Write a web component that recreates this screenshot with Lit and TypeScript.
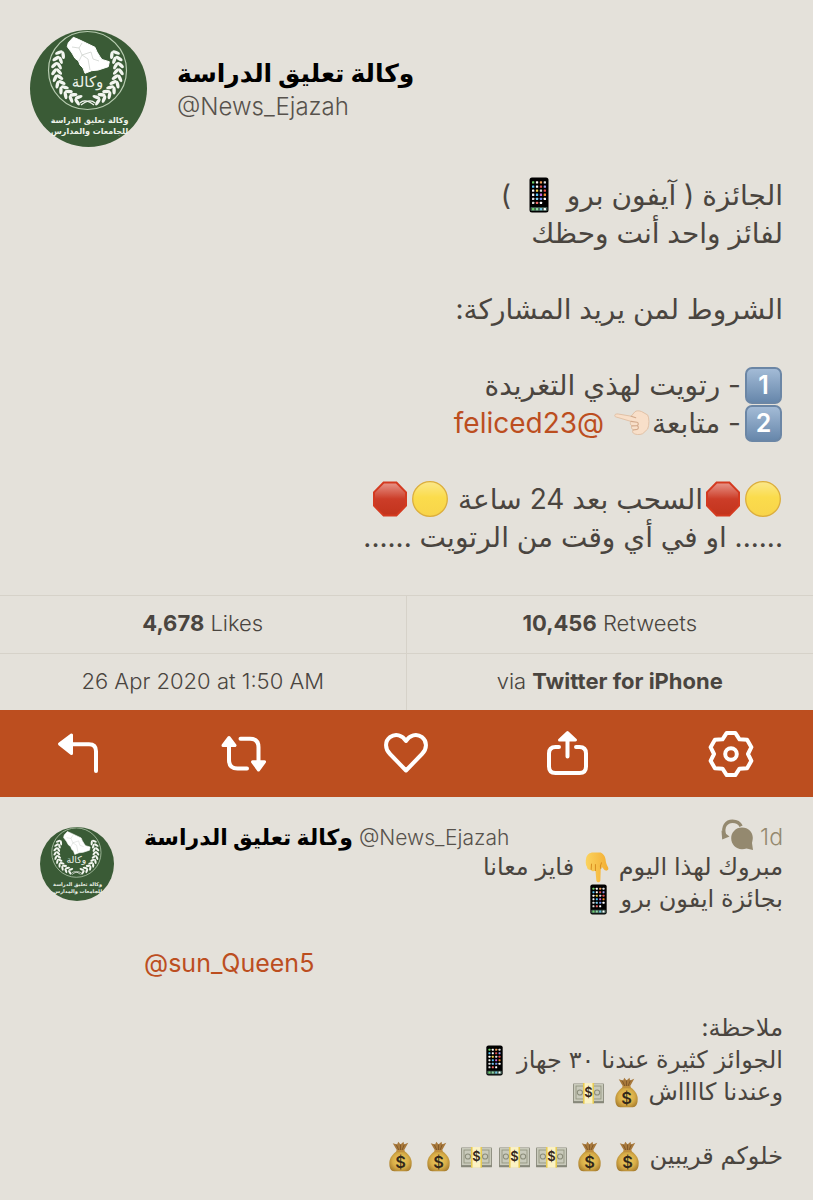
import { LitElement, html, svg, css } from "lit";
import { customElement } from "lit/decorators.js";

const polar = (cx: number, cy: number, r: number, deg: number) => {
  const a = (deg * Math.PI) / 180;
  return [cx + r * Math.cos(a), cy + r * Math.sin(a)];
};

/* ---------- emoji ---------- */

const phone = () => {
  const colors = ["#6fd36b", "#fff", "#f5a05a", "#ddd", "#5ac8fa", "#fff", "#e65050", "#9c9cf0", "#fff", "#f7d64a", "#ddd", "#e65050", "#f0f0f0", "#5ac8fa", "#c86be0", "#f58a2a", "#ddd", "#7fd0f0", "#6f8fe8", "#fff", "#ddd", "#f06a6a", "#fff"];
  return html`<svg class="emoji" viewBox="0 0 36 36" role="img" aria-label="phone">
    <rect x="8.5" y="0.5" width="19" height="35" rx="2.5" fill="#000" />
    <rect x="9.5" y="30" width="17" height="4" rx="1" fill="#3f5a50" />
    ${colors.map((c, i) => svg`<rect x=${11 + (i % 4) * 3.9} y=${4.3 + Math.floor(i / 4) * 4.1} width="2.3" height="2.3" rx=".5" fill=${c} />`)}
    ${["#6fd36b", "#8fd8a0", "#6ec6e8", "#fff"].map((c, i) => svg`<rect x=${11 + i * 3.9} y="30.9" width="2.3" height="2.3" rx=".5" fill=${c} />`)}
  </svg>`;
};

const yellow = () => html`<svg class="emoji" viewBox="0 0 36 36" role="img" aria-label="yellow circle">
  <defs><linearGradient id="y" x2="0" y2="1"><stop stop-color="#fbe88a" /><stop offset=".45" stop-color="#fbdc4c" /><stop offset="1" stop-color="#f8d44a" /></linearGradient></defs>
  <circle cx="18" cy="18" r="17.3" fill="url(#y)" stroke="#dcae3c" stroke-width="1.3" />
</svg>`;

const stop = () => html`<svg class="emoji" viewBox="0 0 36 36" role="img" aria-label="stop sign">
  <defs><linearGradient id="s" x2="0" y2="1"><stop stop-color="#e8968a" /><stop offset=".5" stop-color="#cc3d28" /><stop offset="1" stop-color="#c2331c" /></linearGradient></defs>
  <path d="M11.6 1.5h12.8l9.6 9.8v13.4l-9.6 9.8H11.6L2 24.700V11.300z" fill="url(#s)" stroke="#d43a20" stroke-width="2" />
</svg>`;

const pointLeft = () => html`<svg class="emoji" viewBox="0 0 36 36" role="img" aria-label="pointing left">
  <path d="M.8 10.500C.8 9 2.500 8.800 4.200 9l13 2.200 3.500-4.200c1.500-1.600 4.500-1.400 7-.4l6 3.400c1.500 3 1.800 9.500 0 14l-5 4.700c-3 1.400-8 1-9.500-.7-1.200-1.300-.6-2.300.3-3.200-2.200-.8-2.600-2.300-1.600-4-1.800-1-2-3-.9-4.400L2.800 12.200C1.500 12 .8 11.500.8 10.500z" fill="#f8dfc9" stroke="#dfbda2" stroke-width=".9" />
  <path d="M17 16.400l6 .8c2 .6 1.600 3.400-.4 3.500l-4.600.2M19 25l4-.6c1.600-.3 1.900-2.600.4-3.700M17.200 11.200l4.500 1.600" fill="none" stroke="#d2a98b" stroke-width="1.100" stroke-linecap="round" />
</svg>`;

const pointDown = () => html`<svg class="emoji" viewBox="0 0 36 36" role="img" aria-label="pointing down">
  <defs><linearGradient id="d" x2="1" y2="0"><stop stop-color="#fbd35e" /><stop offset="1" stop-color="#f3ae34" /></linearGradient></defs>
  <path d="M6 7C7 3 10 .5 14 .5h9c3 1.500 5 4 5.500 8 .3 3 1 6 3 9.500 1 2-.6 4-2.600 3.600-1.600-.4-2.900-1.800-3.900-3.600l-2 .3L22.500 33c-.3 2.800-4.300 2.800-4.700 0L16.800 21.500c-1.500 1.500-4.600 1.200-5-1C9.400 21 6.900 19.600 7 17.300 5.200 15 5.200 11 6 7z" fill="url(#d)" />
  <path d="M11.800 20.500l.4-6.500M16.800 21.500V14.500M23 19.300c-.6-2-.5-4.500.8-6.700" fill="none" stroke="#d98f22" stroke-width="1.200" stroke-linecap="round" />
</svg>`;

const bag = () => html`<svg class="emoji" viewBox="0 0 36 36" role="img" aria-label="money bag">
  <defs><radialGradient id="b" cx=".5" cy=".5" r=".6"><stop stop-color="#f0cf60" /><stop offset=".6" stop-color="#d8ad48" /><stop offset="1" stop-color="#a47a2c" /></radialGradient></defs>
  <path d="M9 2.500l5 1.500L15.500 1l2.500 3L21.500 1l.6 3L27 2l-5.500 10h-7z" fill="#a8793c" />
  <path d="M13 4l3.500 7.500M18 4v7M22.500 4l-2.900 7" stroke="#7d5424" stroke-width="1" />
  <path d="M14.500 11h7C27 14.500 31 19.500 31 25.500c0 6.500-2.500 9.500-5.500 9.500h-15c-3.500 0-5.500-3-5.500-9.500 0-6 4.500-11 9.500-14.500z" fill="url(#b)" />
  <rect x="13" y="10.500" width="10" height="2.400" rx="1.200" fill="#c08f3e" />
  <text x="18" y="31" class="dollar" font-size="19">$</text>
</svg>`;

const cash = () => html`<svg class="emoji" viewBox="0 0 36 36" role="img" aria-label="banknotes">
  <rect y="7.500" width="36" height="23" rx="1" fill="#87887a" />
  <rect x="1" y="8" width="34" height="20" fill="#c9cabb" />
  <rect x="3.500" y="10.500" width="29" height="15" fill="none" stroke="#93957f" stroke-width="1" />
  <circle cx="8" cy="18" r="3" fill="none" stroke="#8b8d7a" stroke-width="1.200" />
  <circle cx="28" cy="18" r="3" fill="none" stroke="#8b8d7a" stroke-width="1.200" />
  <rect x="12" y="7" width="12" height="24" fill="#fbf2c4" />
  <path d="M12.500 7v24M23.500 7v24" stroke="#e8cb52" stroke-width="1.800" />
  <text x="18" y="23.500" class="dollar" font-size="15">$</text>
</svg>`;

/* ---------- avatar ---------- */

const leaves = () => {
  const out = [];
  for (let i = 0; i < 10; i++) {
    const a = 108 + i * 11.5;
    for (const side of [1, -1]) {
      for (const inner of [1, -1]) {
        const [x, y] = polar(0, 40, inner === 1 ? 28.5 : 33.5, a);
        const turn = a + 90 + inner * -38;
        out.push(svg`<g transform=${`translate(57.500 0) scale(${side} 1) translate(${x} ${y}) rotate(${turn})`}><ellipse rx="4" ry="1.700" fill="#f3f6f0" /></g>`);
      }
    }
  }
  return out;
};

const avatar = () => html`<svg class="avatar" viewBox="0 0 117 117" role="img" aria-label="وكالة تعليق الدراسة">
  <circle cx="58.500" cy="58.500" r="58.500" fill="#3a5b36" />
  <circle cx="57.500" cy="40.500" r="39" fill="none" stroke="#b9cdb2" stroke-width="1.200" />
  ${leaves()}
  <path d="M50 73c4-4 9-2 14 2M65 73c-4-4-9-2-14 2" fill="none" stroke="#f3f6f0" stroke-width="1.200" />
  <path d="M43.300 7.300L48.300 9.300 56.700 13.300 65 17.300 67 22 70 26.700 72 29.500 79.300 31.700 78.300 36.700 68.300 40 61.700 40.700 55 43.300 53 38 50 35 48.500 31 45 28.300 42 23 37.300 16.700 38.300 12.700z" fill="#fff" stroke="#fff" stroke-linejoin="round" />
  <path d="M42 17l7 1 3-5M49 18l3 7 9-3M52 25l-3 6M52 25l6 4 2 11M61 22l2 7 6 2" fill="none" stroke="#cfd3cf" stroke-width=".8" />
  <text x="57.500" y="57" class="seal" font-size="15">وكالة</text>
  <text x="59.500" y="93" class="seal strong" font-size="8">وكالة تعليق الدراسة</text>
  <text x="59.500" y="104" class="seal strong" font-size="8">للجامعات والمدارس</text>
</svg>`;

/* ---------- action icons ---------- */

const gearPath = () => {
  const pts: string[] = [];
  for (let k = 0; k < 6; k++) {
    const mid = -90 + k * 60;
    for (const [off, r] of [[-11.5, 21.500], [11.5, 21.500], [30, 17]]) {
      const [x, y] = polar(23, 24, r, mid + off);
      pts.push(`${x.toFixed(2)} ${y.toFixed(2)}`);
    }
  }
  return `M${pts.join("L")}Z`;
};

const icons = [
  { label: "Reply", art: svg`<path d="M16 14.300H32q7 0 7 7V41" /><path class="solid" d="M2.500 14L14.500 5v18.500z" />` },
  { label: "Retweet", art: svg`<path d="M9 15v15q0 8.500 8.500 8.500H27M20.500 8.800H30q8.500 0 8.500 8.500V32" /><path class="solid" d="M9 7.500L15 15.500H3zM38.500 40L44.500 31.800H32.500z" />` },
  { label: "Like", art: svg`<path d="M24 40.500L8 24C2.500 18.500 3 11 8 7.200c5.500-4 12.500-2 16 3.800 3.500-5.800 10.500-7.800 16-3.800 5 3.800 5.500 11.300 0 16.800z" />` },
  { label: "Share", art: svg`<path d="M14 17h-3.500q-6.500 0-6.500 6.500V36.500q0 6.500 6.500 6.500h24q6.500 0 6.500-6.500V23.500q0-6.500-6.500-6.500H31M22.500 10v16.500" /><path class="solid" d="M22.500 2.500L30.500 10h-16z" />` },
  { label: "Settings", art: svg`<path d=${gearPath()} /><circle cx="23" cy="24" r="5.800" />` },
];

const link = (handle: string) => html`<a class="mention" href=${"#" + handle}>@${handle}</a>`;

@customElement("app-root")
export class AppRoot extends LitElement {
  static styles = css`
    :host {
      display: block;
      min-height: 100vh;
      overflow: hidden;
      background: #e4e1da;
      color: #4a453f;
      font-family: Inter, "DejaVu Sans", sans-serif;
    }
    * { box-sizing: border-box; }
    a { color: inherit; text-decoration: none; }
    p, h1, h2 { margin: 0; }
    .head {
      display: flex;
      align-items: center;
      gap: 30px;
      padding: 30px 30px 0;
    }
    .avatar { display: block; width: 117px; height: 117px; flex: none; }
    .seal { fill: #eef3ea; text-anchor: middle; font-family: "DejaVu Sans"; }
    .strong { font-weight: 700; }
    .name { color: #000; font-weight: 700; font-size: 25px; line-height: 36px; }
    .handle { font-weight: 300; font-size: 24px; line-height: 32px; color: #57524c; }
    .body { text-align: right; }
    .tweet { padding: 29px 30px 39px; font-size: 28px; line-height: 38px; }
    .body p { min-height: 1lh; }
    .emoji {
      width: 36px;
      height: 36px;
      margin: -8px 2px;
      vertical-align: 0;
    }
    .dollar { font-family: Inter, sans-serif; font-weight: 600; text-anchor: middle; fill: #33291a; }
    .key {
      display: inline-block;
      width: 37px;
      height: 37px;
      margin: -8px 1px -8px 4px;
      border: 2px solid #6b86a5;
      border-radius: 7px;
      background: linear-gradient(#a3bbd6, #6787ab);
      color: #fff;
      font-size: 25px;
      font-weight: 600;
      line-height: 33px;
      text-align: center;
      vertical-align: 1px;
    }
    .mention { color: #bc4e1f; }
    .stats { display: grid; grid-template-columns: 1fr 1fr; grid-template-rows: 58px 57px; }
    .stat {
      border-top: 1px solid #d6d2c9;
      font-size: 22px;
      font-weight: 300;
      line-height: 54px;
      text-align: center;
    }
    .stat:nth-child(odd) { border-right: 1px solid #d6d2c9; }
    .stat b { font-weight: 700; }
    .actions {
      display: grid;
      grid-template-columns: repeat(5, 1fr);
      height: 87px;
      background: #bc4e1f;
    }
    .action {
      display: grid;
      place-items: center;
      padding: 0;
      border: 0;
      background: none;
    }
    .action svg {
      width: 48px;
      height: 48px;
      fill: none;
      stroke: #fff;
      stroke-width: 4;
      stroke-linecap: round;
      stroke-linejoin: round;
    }
    .action .solid { fill: #fff; stroke-width: 3; }
    .reply {
      display: grid;
      grid-template-columns: 74px 1fr;
      column-gap: 30px;
      padding: 22px 30px 30px 40px;
    }
    .reply .avatar { width: 74px; height: 74px; margin-top: 8px; }
    .meta { display: flex; align-items: baseline; gap: 6px; height: 32px; }
    .meta .name { font-size: 22px; }
    .meta .handle { font-size: 21px; flex: 1; }
    .meta svg { width: 34px; height: 34px; align-self: center; }
    .time { font-size: 23px; font-weight: 300; color: #94896f; }
    .reply .body { font-size: 24px; line-height: 32px; }
    .reply .mention { font-size: 25px; }
    .reply .emoji { width: 31px; height: 31px; margin: -8px 0; vertical-align: 0; }
    .reply .left { text-align: left; }
  `;

  render() {
    return html`
      <header class="head">
        ${avatar()}
        <div>
          <h1 class="name" lang="ar">وكالة تعليق الدراسة</h1>
          <a class="handle" href="#News_Ejazah">@News_Ejazah</a>
        </div>
      </header>
      <div class="body tweet" dir="rtl" lang="ar">
        <p>الجائزة ( آيفون برو ${phone()} )</p>
        <p>لفائز واحد أنت وحظك</p>
        <p></p>
        <p>الشروط لمن يريد المشاركة:</p>
        <p></p>
        <p><span class="key">1</span>- رتويت لهذي التغريدة</p>
        <p><span class="key">2</span>- متابعة${pointLeft()} ${link("feliced23")}</p>
        <p></p>
        <p>${yellow()}${stop()}السحب بعد 24 ساعة ${yellow()}${stop()}</p>
        <p>...... او في أي وقت من الرتويت ......</p>
      </div>
      <section class="stats">
        <div class="stat"><b>4,678</b> Likes</div>
        <div class="stat"><b>10,456</b> Retweets</div>
        <div class="stat">26 Apr 2020 at 1:50 AM</div>
        <div class="stat">via <b>Twitter for iPhone</b></div>
      </section>
      <nav class="actions">
        ${icons.map((i) => html`<button class="action" aria-label=${i.label}><svg viewBox="0 0 48 48">${i.art}</svg></button>`)}
      </nav>
      <article class="reply">
        ${avatar()}
        <div>
          <div class="meta">
            <h2 class="name" lang="ar">وكالة تعليق الدراسة</h2>
            <a class="handle" href="#News_Ejazah">@News_Ejazah</a>
            <svg viewBox="0 0 34 34" fill="#94896f" aria-hidden="true">
              <path d="M4.500 17C2 8.500 6.500 3.200 12.500 3.200c4.500 0 7.300 2 8.600 5" fill="none" stroke="#94896f" stroke-width="3.400" />
              <path d="M1.500 12.500L2.200 21.500 9.500 18.500z" />
              <path d="M22 9.500c6.300 0 10.800 4.800 10.800 10.300 0 2.200-.6 4-.8 5.200l1 7-6.500-1.400c-1.500.4-2.800.6-4.500.6-6.300 0-10.800-4.900-10.800-10.900S15.700 9.500 22 9.500z" />
            </svg>
            <span class="time">1d</span>
          </div>
          <div class="body" dir="rtl" lang="ar">
            <p>مبروك لهذا اليوم ${pointDown()} فايز معانا</p>
            <p>بجائزة ايفون برو ${phone()}</p>
            <p></p>
            <p class="left" dir="ltr">${link("sun_Queen5")}</p>
            <p></p>
            <p>ملاحظة:</p>
            <p>الجوائز كثيرة عندنا ٣٠ جهاز ${phone()}</p>
            <p>وعندنا كااااش ${bag()} ${cash()}</p>
            <p></p>
            <p>خلوكم قريبين ${bag()} ${bag()} ${cash()} ${cash()} ${cash()} ${bag()} ${bag()}</p>
          </div>
        </div>
      </article>
    `;
  }
}
